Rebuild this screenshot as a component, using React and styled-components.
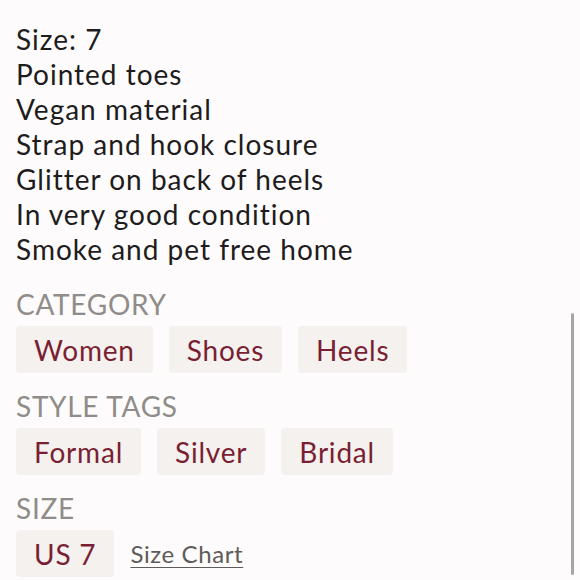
import styled, { createGlobalStyle } from "styled-components";

const GlobalStyle = createGlobalStyle`
  html, body {
    margin: 0;
    padding: 0;
    background: #fdfbfb;
    overflow: hidden;
  }
`;

const Page = styled.div`
  position: relative;
  width: 580px;
  height: 580px;
  padding: 22px 16px 0;
  box-sizing: border-box;
  font-family: "Lato", "Noto Sans", sans-serif;
  letter-spacing: 1px;
  color: #1e1c1c;
`;

const Description = styled.div`
  font-size: 28px;
  line-height: 35px;
  margin-bottom: 22px;
`;

const Section = styled.section`
  margin-bottom: 18px;
`;

const Heading = styled.h3`
  margin: 0 0 7px;
  font-size: 28px;
  line-height: 30px;
  font-weight: 400;
  letter-spacing: 0.7px;
  text-transform: uppercase;
  color: #8f8c89;
`;

const ChipRow = styled.div`
  display: flex;
  align-items: center;
  gap: 16px;
`;

const Chip = styled.span`
  display: inline-flex;
  align-items: center;
  height: 47px;
  padding: 0 18px;
  border-radius: 4px;
  background: #f4f1ee;
  color: #7a1f33;
  font-size: 28px;
  letter-spacing: 0.8px;
`;

const SizeChart = styled.a`
  color: #5f5b58;
  font-size: 24px;
  letter-spacing: 0.6px;
  text-decoration: underline;
  text-decoration-thickness: 1px;
  text-underline-offset: 4px;
`;

const Scrollbar = styled.div`
  position: absolute;
  right: 6px;
  top: 313px;
  width: 3px;
  height: 262px;
  border-radius: 2px;
  background: #a7a5a4;
`;

const lines = [
  "Size: 7",
  "Pointed toes",
  "Vegan material",
  "Strap and hook closure",
  "Glitter on back of heels",
  "In very good condition",
  "Smoke and pet free home",
];

const sections = [
  { title: "Category", chips: ["Women", "Shoes", "Heels"] },
  { title: "Style Tags", chips: ["Formal", "Silver", "Bridal"] },
  { title: "Size", chips: ["US 7"], link: "Size Chart" },
];

export default function App() {
  return (
    <>
      <GlobalStyle />
      <Page>
        <Description>
          {lines.map((l) => (
            <div key={l}>{l}</div>
          ))}
        </Description>
        {sections.map((s) => (
          <Section key={s.title}>
            <Heading>{s.title}</Heading>
            <ChipRow>
              {s.chips.map((c) => (
                <Chip key={c}>{c}</Chip>
              ))}
              {s.link && <SizeChart href="#">{s.link}</SizeChart>}
            </ChipRow>
          </Section>
        ))}
        <Scrollbar />
      </Page>
    </>
  );
}
